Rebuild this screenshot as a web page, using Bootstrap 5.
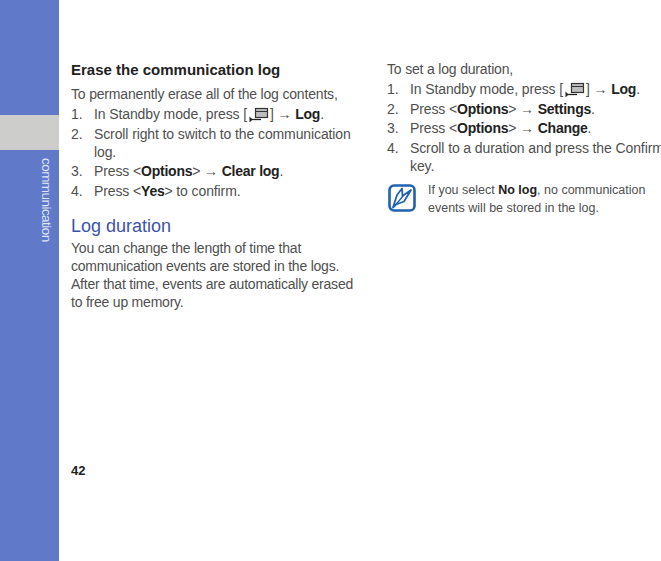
<!DOCTYPE html>
<html lang="en">
<head>
<meta charset="utf-8">
<title>Communication</title>
<link href="https://cdn.jsdelivr.net/npm/bootstrap@5.3.0/dist/css/bootstrap.min.css" rel="stylesheet">
<style>
html,body{height:561px;overflow:hidden;background:#fff}
body{font-family:"Liberation Sans",Arial,sans-serif;font-size:14px;line-height:18px;color:#4f4f4f;letter-spacing:-.18px}
.rail{width:59px;background:#6079c8;height:561px;padding-top:115px}
.rail-band{height:35px;background:#cdcdcb}
.rail-label{writing-mode:vertical-rl;color:#dfe4f5;font-size:13.5px;line-height:14px;margin:8px 6px 0 0;letter-spacing:-.55px}
.sheet{height:561px;padding:61px 0 0 12px;width:602px;overflow:hidden}
.col-a{width:316px;flex:none}
.col-a .para{letter-spacing:-.22px}
.col-a .para:first-of-type{letter-spacing:-.18px}
.col-b{width:274px;flex:none;white-space:nowrap;margin-top:-1px}
.ttl{font-size:15px;line-height:18px;font-weight:700;color:#222;margin:0 0 6px;letter-spacing:0}
.sub{font-size:18px;line-height:22px;font-weight:400;color:#3c53a8;margin:15px 0 2px;letter-spacing:0}
.para{margin:0;width:290px}
.steps{margin:2px 0 0;padding:0;list-style:none;letter-spacing:-.11px}
.steps li{display:flex;margin-bottom:1.500px}
.num{width:23px;flex:none}
.steps b{font-weight:700;color:#222;letter-spacing:-.25px}
.note{margin-top:6px;font-size:12.5px;line-height:18px;letter-spacing:0}
.note b{color:#222;font-weight:700}
.note-ico{width:29px;height:29px;margin:3px 11px 0 1px;flex:none}
.key{width:21px;height:15px;vertical-align:-3px;margin:0 1px}
.page-no{font-size:13px;font-weight:700;color:#222;margin:0;position:absolute;left:71px;top:462px;letter-spacing:0}
</style>
</head>
<body>
<div class="d-flex">
  <aside class="rail d-flex flex-column">
    <div class="rail-band"></div>
    <div class="rail-label align-self-end">communication</div>
  </aside>
  <main class="sheet d-flex">
    <section class="col-a">
      <h2 class="ttl">Erase the communication log</h2>
      <p class="para">To permanently erase all of the log contents,</p>
      <ol class="steps">
        <li><span class="num">1.</span><span>In Standby mode, press [<svg class="key" viewBox="0 0 21 15"><rect x="7.500" y="1.500" width="12" height="9" fill="#bdbdbd" stroke="#333" stroke-width="1.200"/><path d="M8 4.500h11" stroke="#333" stroke-width="1"/><path d="M2 12.500h11" stroke="#222" stroke-width="1.300"/><path d="M1.500 9.500v6l3-3z" fill="#222"/></svg>] → <b>Log</b>.</span></li>
        <li><span class="num">2.</span><span>Scroll right to switch to the communication<br>log.</span></li>
        <li><span class="num">3.</span><span>Press &lt;<b>Options</b>&gt; → <b>Clear log</b>.</span></li>
        <li><span class="num">4.</span><span>Press &lt;<b>Yes</b>&gt; to confirm.</span></li>
      </ol>
      <h3 class="sub">Log duration</h3>
      <p class="para">You can change the length of time that communication events are stored in the logs. After that time, events are automatically erased to free up memory.</p>
    </section>
    <section class="col-b">
      <p class="para">To set a log duration,</p>
      <ol class="steps">
        <li><span class="num">1.</span><span>In Standby mode, press [<svg class="key" viewBox="0 0 21 15"><rect x="7.500" y="1.500" width="12" height="9" fill="#bdbdbd" stroke="#333" stroke-width="1.200"/><path d="M8 4.500h11" stroke="#333" stroke-width="1"/><path d="M2 12.500h11" stroke="#222" stroke-width="1.300"/><path d="M1.500 9.500v6l3-3z" fill="#222"/></svg>] → <b>Log</b>.</span></li>
        <li><span class="num">2.</span><span>Press &lt;<b>Options</b>&gt; → <b>Settings</b>.</span></li>
        <li><span class="num">3.</span><span>Press &lt;<b>Options</b>&gt; → <b>Change</b>.</span></li>
        <li><span class="num">4.</span><span>Scroll to a duration and press the Confirm<br>key.</span></li>
      </ol>
      <div class="note d-flex">
        <svg class="note-ico" viewBox="0 0 29 29"><rect x="1.500" y="1.500" width="25" height="25" rx="4.500" fill="none" stroke="#1f62b0" stroke-width="2.600"/><path d="M5 23.500L9 11 14 4.500 14.500 12 23 6 16 17.500 8 20.500z" fill="none" stroke="#1f62b0" stroke-width="1.800" stroke-linejoin="round"/><path d="M8 20.500L15 12" stroke="#1f62b0" stroke-width="1.400"/></svg>
        <div>If you select <b>No log</b>, no communication<br>events will be stored in the log.</div>
      </div>
    </section>
  </main>
</div>
<p class="page-no">42</p>
</body>
</html>
